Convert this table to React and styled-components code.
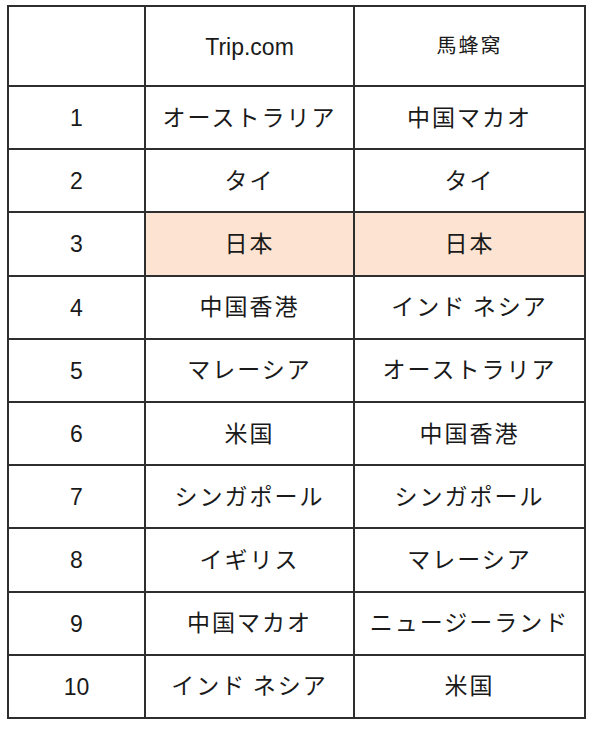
import React from 'react';
import styled, { createGlobalStyle } from 'styled-components';

const GlobalStyle = createGlobalStyle`
    body {
        margin: 0;
        background: #fff;
        font-family: "Liberation Sans", "Noto Sans CJK JP", sans-serif;
        color: #1a1a1a;
    }
`;

const Page = styled.div`
    padding: 5px 0 0 7px;
`;

const Sheet = styled.div`
    display: grid;
    grid-template-columns: 135px 207px 229px;
    grid-template-rows: 78px repeat(10, 1fr);
    gap: 2px;
    padding: 2px;
    width: 575px;
    height: 710px;
    background: #2e2e2e;
`;

const Cell = styled.div`
    display: flex;
    align-items: center;
    justify-content: center;
    background: ${p => (p.$highlight ? '#fde3d1' : '#fff')};
    font-family: ${p => (p.$latin ? '"Liberation Sans", Arial, sans-serif' : '"Noto Sans CJK JP", sans-serif')};
    font-size: ${p => p.$size || 23}px;
    letter-spacing: ${p => (p.$latin ? 0 : 2)}px;
    padding-top: ${p => (p.$latin ? 2 : 0)}px;
    padding-bottom: ${p => (p.$latin ? 0 : 4)}px;
    white-space: nowrap;
`;

const rows = [
    ['オーストラリア', '中国マカオ'],
    ['タイ', 'タイ'],
    ['日本', '日本'],
    ['中国香港', 'インド\u2009ネシア'],
    ['マレーシア', 'オーストラリア'],
    ['米国', '中国香港'],
    ['シンガポール', 'シンガポール'],
    ['イギリス', 'マレーシア'],
    ['中国マカオ', 'ニュージーランド'],
    ['インド\u2009ネシア', '米国'],
];

export default function App() {
    return (
        <Page>
            <GlobalStyle />
            <Sheet>
                <Cell />
                <Cell $latin $size={23}>Trip.com</Cell>
                <Cell $size={20}>馬蜂窝</Cell>
                {rows.map(([trip, mfw], i) => (
                    <React.Fragment key={i}>
                        <Cell $latin $size={23}>{i + 1}</Cell>
                        <Cell $highlight={i === 2}>{trip}</Cell>
                        <Cell $highlight={i === 2}>{mfw}</Cell>
                    </React.Fragment>
                ))}
            </Sheet>
        </Page>
    );
}
